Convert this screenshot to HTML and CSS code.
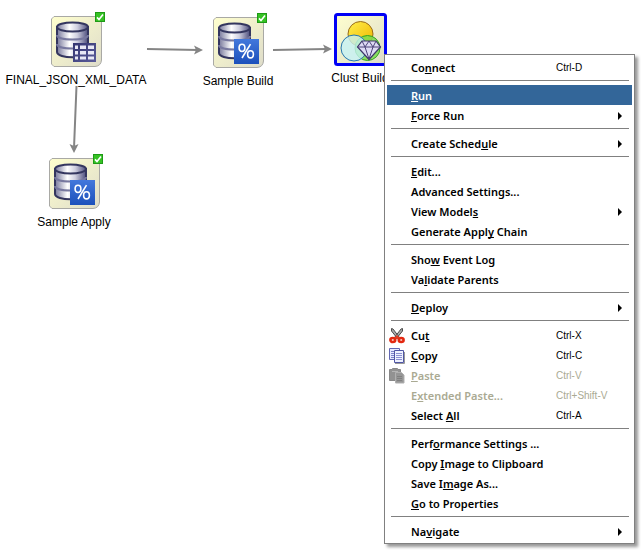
FILE: index.html
```html
<!DOCTYPE html>
<html lang="en">
<head>
<meta charset="utf-8">
<title>Workflow</title>
<link rel="stylesheet" href="styles.css">
</head>
<body>
<svg class="defs" width="0" height="0" aria-hidden="true">
  <defs>
    <linearGradient id="tile-fill" x1="0" y1="0" x2="1" y2="1"><stop offset="0" stop-color="#ffffce"/><stop offset="1" stop-color="#dedcca"/></linearGradient>
    <linearGradient id="metal"><stop offset="0" stop-color="#77789b"/><stop offset=".4" stop-color="#fff"/><stop offset=".65" stop-color="#d0d0e0"/><stop offset="1" stop-color="#4c4d7c"/></linearGradient>
    <linearGradient id="blue" x1="0" y1="0" x2="0" y2="1"><stop offset="0" stop-color="#4378dc"/><stop offset="1" stop-color="#1c50bb"/></linearGradient>
    <linearGradient id="gold" x1="0" y1="0" x2="1" y2="1"><stop offset="0" stop-color="#fff04a"/><stop offset="1" stop-color="#f0b400"/></linearGradient>
    <linearGradient id="grid-fill" x1="0" y1="0" x2="1" y2="1"><stop offset="0" stop-color="#33346f"/><stop offset="1" stop-color="#5b5c9b"/></linearGradient>
    <symbol id="tile" viewBox="0 0 51 51"><path d="M3 .5H48L50.500 3V44Q50 50 44 50.500H3L.5 48V3Z" fill="url(#tile-fill)" stroke="#a9a9a5"/></symbol>
    <symbol id="database" viewBox="0 0 51 51">
      <path d="M6 11V36C6 43 37 43 37 36V11Z" fill="url(#metal)" stroke="#34365f" stroke-width="2"/>
      <path d="M6 19C6 25 37 25 37 19M6 28C6 34 37 34 37 28" fill="none" stroke="#77789f" stroke-width="2"/>
      <ellipse cx="21.500" cy="11" rx="15.500" ry="4.500" fill="url(#metal)" stroke="#34365f" stroke-width="2"/>
    </symbol>
    <symbol id="check" viewBox="0 0 10 10"><rect x=".5" y=".5" width="9" height="9" fill="#36c224" stroke="#1e9a16"/><path d="M2 5.400 4 7.500 8 2.500" fill="none" stroke="#fff" stroke-width="1.600"/></symbol>
    <symbol id="percent" viewBox="0 0 25 25"><path d="M0 0H25V25H0Z" fill="url(#blue)"/><g fill="none" stroke="#fff" stroke-width="1.600"><ellipse cx="8" cy="8.800" rx="2.900" ry="3.600"/><ellipse cx="16.500" cy="15.300" rx="2.900" ry="3.600"/><path d="M16.500 5.200 8 19"/></g></symbol>
  </defs>
</svg>
<main class="canvas">
  <svg class="edges" width="400" height="250" aria-hidden="true">
    <g fill="none" stroke="#858585" stroke-width="2"><path d="M147 49 198 50M273 50 327 49M76.500 86 74 148"/></g>
    <g fill="#858585"><path d="M203 50 194 54.500 196 50 194 45.500ZM332 49 323 53.500 325 49 323 44.500ZM74 153 69.500 144 74 146 78.500 144Z"/></g>
  </svg>
  <figure class="node data">
    <svg class="icon" viewBox="0 0 51 51"><use href="#tile"/><use href="#database"/><path d="M22 27H45V46H22Z" fill="url(#grid-fill)"/><path d="M24 29.500H27V33H24ZM29 29.500H35V33H29ZM37 29.500H43V33H37ZM24 35H27V38.500H24ZM29 35H35V38.500H29ZM37 35H43V38.500H37ZM24 40.500H27V43.500H24ZM29 40.500H35V43.500H29ZM37 40.500H43V43.500H37Z" fill="#e8e8f5"/></svg>
    <svg class="badge"><use href="#check"/></svg>
    <figcaption>FINAL_JSON_XML_DATA</figcaption>
  </figure>
  <figure class="node build">
    <svg class="icon" viewBox="0 0 51 51"><use href="#tile"/><use href="#database"/><use href="#percent" x="21" y="22" width="25" height="25"/></svg>
    <svg class="badge"><use href="#check"/></svg>
    <figcaption>Sample Build</figcaption>
  </figure>
  <figure class="node apply">
    <svg class="icon" viewBox="0 0 51 51"><use href="#tile"/><use href="#database"/><use href="#percent" x="21" y="22" width="25" height="25"/></svg>
    <svg class="badge"><use href="#check"/></svg>
    <figcaption>Sample Apply</figcaption>
  </figure>
  <figure class="node clust">
    <svg class="icon" viewBox="0 0 51 51"><rect x=".5" y=".5" width="50" height="50" rx="2" fill="url(#tile-fill)" stroke="#0000f5" stroke-width="3"/>
      <circle cx="25.500" cy="20" r="12.500" fill="url(#gold)" stroke="#986b19"/>
      <circle cx="32.500" cy="34" r="12.500" fill="#7ddc50" fill-opacity=".85" stroke="#32a31f"/>
      <circle cx="19" cy="34" r="13" fill="#c6f1f5" fill-opacity=".8" stroke="#2877ad"/>
      <path d="M27 27H41L45.500 33 34 45.500 22.500 33Z" fill="#dedaf5" stroke="#3e3568" stroke-width="1.200"/><path d="M22.500 33H45.500M27 27 30 33 34 45 38 33 41 27M30 33 34 27 38 33" fill="none" stroke="#4c4379"/>
    </svg>
    <figcaption>Clust Build</figcaption>
  </figure>

  <div class="menu" role="menu">
    <button class="item" role="menuitem"><span>Co<u>n</u>nect</span><kbd>Ctrl-D</kbd></button>
    <hr>
    <button class="item selected" role="menuitem"><span><u>R</u>un</span></button>
    <button class="item parent" role="menuitem" aria-haspopup="true"><span><u>F</u>orce Run</span></button>
    <hr>
    <button class="item parent" role="menuitem" aria-haspopup="true"><span>Create Sched<u>u</u>le</span></button>
    <hr>
    <button class="item" role="menuitem"><span><u>E</u>dit...</span></button>
    <button class="item" role="menuitem"><span>Advanced Settings...</span></button>
    <button class="item parent" role="menuitem" aria-haspopup="true"><span>View Model<u>s</u></span></button>
    <button class="item" role="menuitem"><span>Generate Appl<u>y</u> Chain</span></button>
    <hr>
    <button class="item" role="menuitem"><span>Sho<u>w</u> Event Log</span></button>
    <button class="item" role="menuitem"><span>Va<u>l</u>idate Parents</span></button>
    <hr>
    <button class="item parent" role="menuitem" aria-haspopup="true"><span><u>D</u>eploy</span></button>
    <hr>
    <button class="item" role="menuitem"><svg viewBox="0 0 16 16"><path d="M2.500.500 4 1 10.500 9.500 8.500 10.500 2.500 3ZM13.500.500 12 1 5.500 9.500 7.500 10.500 13.500 3Z" fill="#aaa" stroke="#4c4c4c"/><g fill="#fff" stroke="#e32810" stroke-width="2.600"><ellipse cx="3.800" cy="12" rx="2.400" ry="2"/><ellipse cx="12.200" cy="12" rx="2.400" ry="2"/></g><path d="M5.500 9.500 8 7 10.500 9.500 8 11.500Z" fill="#df3b21"/></svg><span>Cu<u>t</u></span><kbd>Ctrl-X</kbd></button>
    <button class="item" role="menuitem"><svg viewBox="0 0 16 16"><path d="M.5.500H10.500V11.500H.5Z" fill="#e6e9ff" stroke="#6267b2"/><path d="M2 3.500H5M2 5.500H5M2 7.500H5M2 9.500H5" stroke="#7d83c9"/><path d="M6 15.500H15.500V4" fill="none" stroke="#999"/><path d="M5.500 2.500H14.500V14.500H5.500Z" fill="#eef1ff" stroke="#5056a5"/><path d="M7 5.500H13M7 7.500H13M7 9.500H13M7 11.500H13" stroke="#8b90d2"/></svg><span><u>C</u>opy</span><kbd>Ctrl-C</kbd></button>
    <button class="item" role="menuitem" disabled><svg viewBox="0 0 16 16"><path d="M.5 1.500H3.500V.5H8.500V1.500H11.500V12.500H.5Z" fill="#929292" stroke="#888"/><path d="M3 3.500H9" stroke="#b5b5b5"/><path d="M6.500 4.500H12.500L15 7V15H6.500Z" fill="#969696" stroke="#b0b0b0"/><path d="M8 8.500H13M8 10.500H13M8 12.500H13" stroke="#808080"/></svg><span><u>P</u>aste</span><kbd>Ctrl-V</kbd></button>
    <button class="item" role="menuitem" disabled><span>E<u>x</u>tended Paste...</span><kbd>Ctrl+Shift-V</kbd></button>
    <button class="item" role="menuitem"><span>Select <u>A</u>ll</span><kbd>Ctrl-A</kbd></button>
    <hr>
    <button class="item" role="menuitem"><span>Perf<u>o</u>rmance Settings ...</span></button>
    <button class="item" role="menuitem"><span>Copy <u>I</u>mage to Clipboard</span></button>
    <button class="item" role="menuitem"><span>Save I<u>m</u>age As...</span></button>
    <button class="item" role="menuitem"><span><u>G</u>o to Properties</span></button>
    <hr>
    <button class="item parent" role="menuitem" aria-haspopup="true"><span>Na<u>v</u>igate</span></button>
  </div>
</main>
</body>
</html>
```
FILE: styles.css
```css
* { box-sizing: border-box; }
body { margin: 0; background: #fff; color: #000; font: 12px/16px "Liberation Sans", sans-serif; }
.defs { position: absolute; }
.canvas { position: relative; min-height: 100vh; }
.edges { position: absolute; left: 0; top: 0; }

.node { position: absolute; width: 160px; margin: 0; display: flex; flex-direction: column; align-items: center; gap: 5px; }
.node .icon { width: 51px; height: 51px; overflow: visible; }
.node .badge { position: absolute; left: 99px; top: -4px; width: 10px; height: 10px; }
.data { left: -4px; top: 16px; }
.build { left: 158px; top: 17px; }
.apply { left: -6px; top: 158px; }
.clust { left: 280px; top: 14px; }

.menu {
  position: absolute; left: 384px; top: 54px; width: 251px; padding: 2px;
  display: flex; flex-direction: column;
  background: #fff; border: 1px solid #808080; box-shadow: 3px 3px 3px #999;
}
.item {
  display: grid; grid-template-columns: 24px 145px 1fr 10px; align-items: center;
  height: 20px; padding: 2px 0 0; border: 0; background: none; color: #000; text-align: left;
  font: 600 11px/18px "Noto Sans", sans-serif;
}
.item svg { grid-column: 1; grid-row: 1; width: 16px; height: 16px; margin-left: 2px; }
.item span { grid-column: 2; grid-row: 1; white-space: nowrap; }
.item kbd { grid-column: 3; grid-row: 1; font: 10px/18px "Liberation Sans", sans-serif; }
.item u { text-underline-offset: 1px; text-decoration-thickness: 1px; text-decoration-skip-ink: none; }
.parent::after { content: ""; grid-column: 4; grid-row: 1; justify-self: start; margin-left: -4px; border: 4px solid transparent; border-left-color: #000; border-right: 0; }
.selected { background: #336699; color: #fff; }
.item:disabled { color: #aaaa93; }
.menu hr { width: calc(100% - 7px); height: 1px; margin: 3px 0 4px 4px; border: 0; background: #808080; }
```
